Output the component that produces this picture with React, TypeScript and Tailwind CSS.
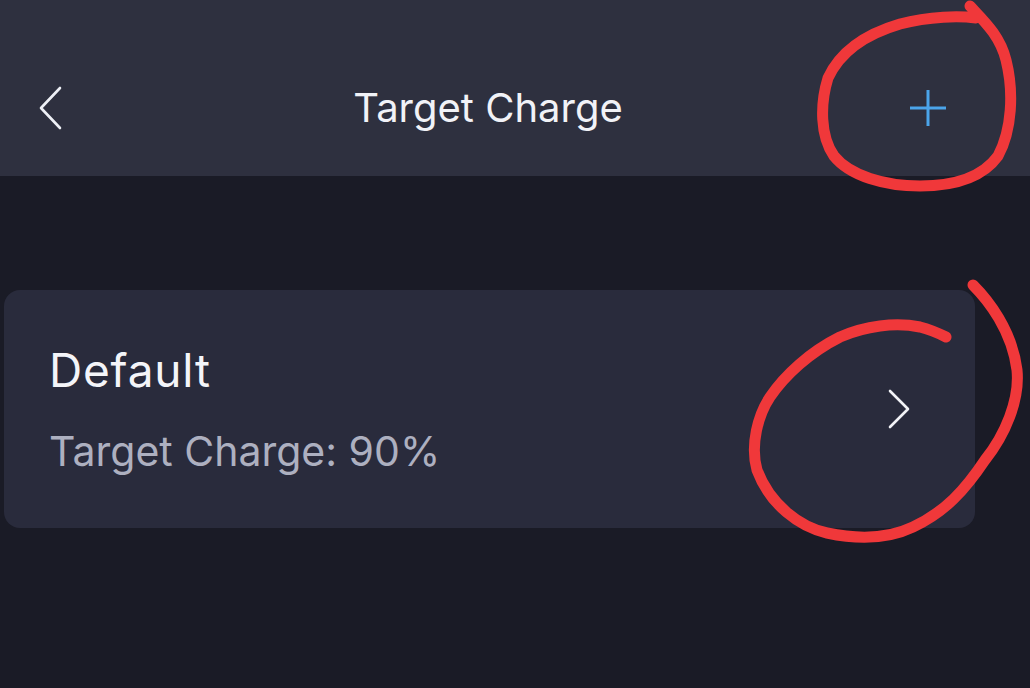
import * as React from "react";

function BackIcon() {
    return (
        <svg width="24" height="44" viewBox="0 0 24 44" fill="none">
            <path
                d="M22 2L3 22L22 42"
                stroke="#eef0f6"
                strokeWidth={2.6}
                strokeLinecap="round"
                strokeLinejoin="round"
            />
        </svg>
    );
}

function PlusIcon() {
    return (
        <svg width="40" height="40" viewBox="0 0 40 40" fill="none">
            <path d="M20 2v36M2 20h36" stroke="#4ba4ea" strokeWidth={3} />
        </svg>
    );
}

function ChevronIcon() {
    return (
        <svg width="24" height="40" viewBox="0 0 24 40" fill="none">
            <path
                d="M3 2L21 20L3 38"
                stroke="#f2f3f7"
                strokeWidth={2.6}
                strokeLinecap="round"
                strokeLinejoin="round"
            />
        </svg>
    );
}

// hand-drawn red marks that sit over the screenshot
function Annotations() {
    return (
        <svg
            className="pointer-events-none absolute left-0 top-0"
            width="1030"
            height="688"
            viewBox="0 0 1030 688"
            fill="none"
        >
            <path
                d="M970 6 C985 22 1000 36 1006 60 C1014 92 1012 130 998 156 C982 178 955 186 920 186 C885 186 850 176 834 156 C820 136 820 104 828 78 C840 52 866 34 900 24 C930 16 960 16 976 18"
                stroke="#f0383a"
                strokeWidth={11}
                strokeLinecap="round"
                strokeLinejoin="round"
            />
            <path
                d="M973 285 C988 300 1012 330 1017 370 C1020 400 1005 435 985 460 C965 490 945 512 913 527 C890 538 860 540 827 533 C800 527 770 505 757 470 C750 445 758 415 770 397 C785 375 810 352 840 337 C865 326 895 322 920 327 C932 330 940 334 946 337"
                stroke="#f0383a"
                strokeWidth={11}
                strokeLinecap="round"
                strokeLinejoin="round"
            />
        </svg>
    );
}

export default function App() {
    return (
        <div
            className="relative h-[688px] w-[1030px] overflow-hidden bg-[#1a1b26]"
            style={{ fontFamily: "Inter, 'Noto Sans', sans-serif" }}
        >
            <header className="flex h-[176px] items-center bg-[#2e303f] pl-[38px] pr-[82px] pt-[40px]">
                <div className="flex w-[30px] items-center">
                    <BackIcon />
                </div>
                <h1 className="flex-1 text-center text-[40px] font-normal leading-[48px] tracking-[0px] text-[#f1f2f7]">
                    Target Charge
                </h1>
                <div className="flex w-[40px] items-center justify-center">
                    <PlusIcon />
                </div>
            </header>

            <main className="pl-[4px] pr-[55px] pt-[114px]">
                <div className="flex h-[238px] items-center justify-between rounded-[16px] bg-[#292b3c] pl-[45px] pr-[64px]">
                    <div className="flex flex-col gap-[30px]">
                        <div className="text-[46px] leading-[54px] tracking-[0.8px] text-[#f4f5f9]">
                            Default
                        </div>
                        <div className="text-[41px] leading-[48px] text-[#adb0c0]">
                            Target Charge: 90%
                        </div>
                    </div>
                    <ChevronIcon />
                </div>
            </main>

            <Annotations />
        </div>
    );
}
